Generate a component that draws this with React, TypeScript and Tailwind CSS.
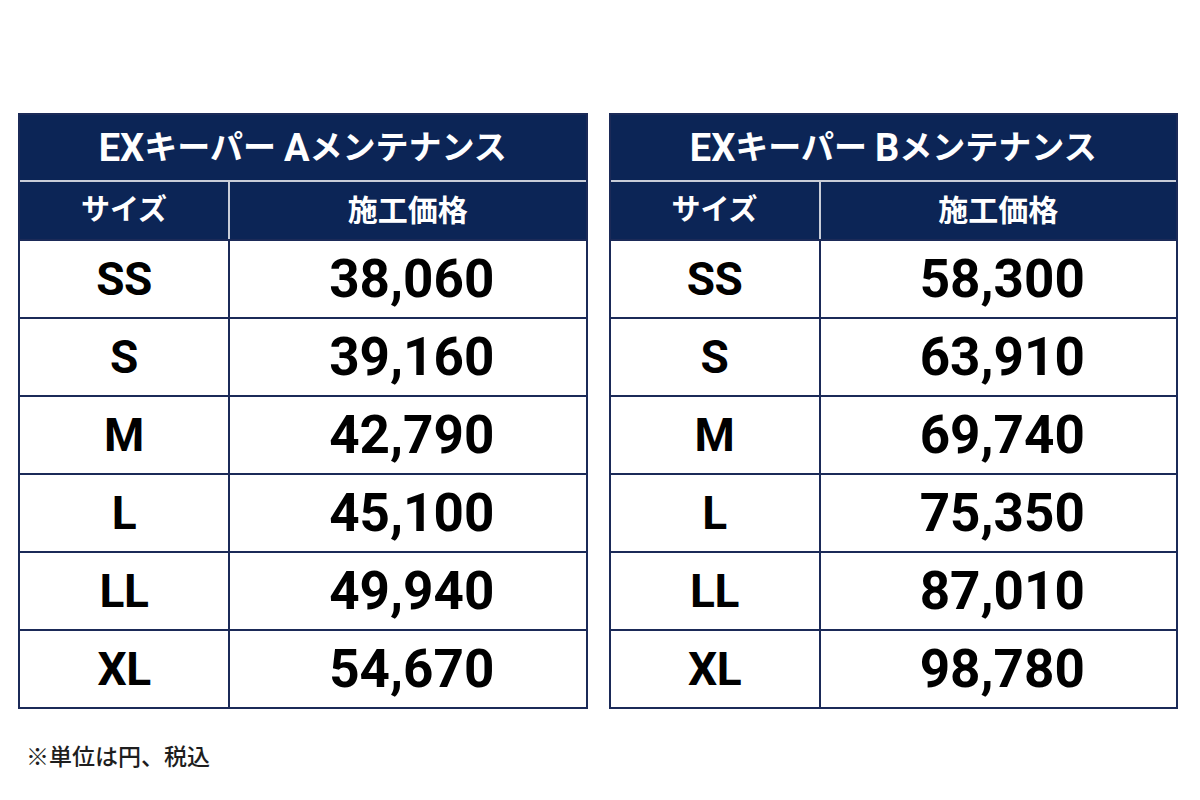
const plans = [
  {
    grade: "A",
    rows: [
      ["SS", "38,060"],
      ["S", "39,160"],
      ["M", "42,790"],
      ["L", "45,100"],
      ["LL", "49,940"],
      ["XL", "54,670"],
    ],
  },
  {
    grade: "B",
    rows: [
      ["SS", "58,300"],
      ["S", "63,910"],
      ["M", "69,740"],
      ["L", "75,350"],
      ["LL", "87,010"],
      ["XL", "98,780"],
    ],
  },
];

function PriceTable({ grade, rows }: { grade: string; rows: string[][] }) {
  return (
    <div className="flex-1 border-2 border-[#1b2a58] bg-white">
      {/* title */}
      <div className="h-[65px] bg-[#0c2556] flex items-center justify-center text-white font-bold text-[33px] leading-none">
        <span className="text-[38px]">EX</span>
        <span>キーパー</span>
        <span className="text-[38px] ml-2">{grade}</span>
        <span>メンテナンス</span>
      </div>
      <div className="h-[2px] bg-[#c9cdd8]" />
      {/* header */}
      <div className="grid grid-cols-[208px_2px_1fr] h-[57px] bg-[#0c2556] text-white font-bold text-[29px]">
        <div className="flex items-center justify-center">サイズ</div>
        <div className="bg-[#c9cdd8]" />
        <div className="flex items-center justify-center text-[30px]">施工価格</div>
      </div>
      {rows.map(([size, price]) => (
        <div
          key={size}
          className="grid grid-cols-[208px_2px_1fr] h-[78px] border-t-2 border-[#1b2a58] text-black font-bold leading-none"
        >
          <div className="flex items-center justify-center text-[46px] tracking-[-0.5px]">
            {size}
          </div>
          <div className="bg-[#1b2a58]" />
          <div className="flex items-center justify-center text-[53px] pl-2">
            {price}
          </div>
        </div>
      ))}
    </div>
  );
}

export default function App() {
  return (
    <div
      className="w-[1200px] h-[800px] bg-white"
      style={{ fontFamily: '"Roboto", "Noto Sans CJK JP", sans-serif' }}
    >
      <div className="flex gap-[21px] pl-[18px] pr-[22px] pt-[113px]">
        {plans.map((p) => (
          <PriceTable key={p.grade} grade={p.grade} rows={p.rows} />
        ))}
      </div>
      <p className="mt-[32px] pl-[26px] text-[23px] font-medium text-[#1e1e1e]">
        ※単位は円、税込
      </p>
    </div>
  );
}
